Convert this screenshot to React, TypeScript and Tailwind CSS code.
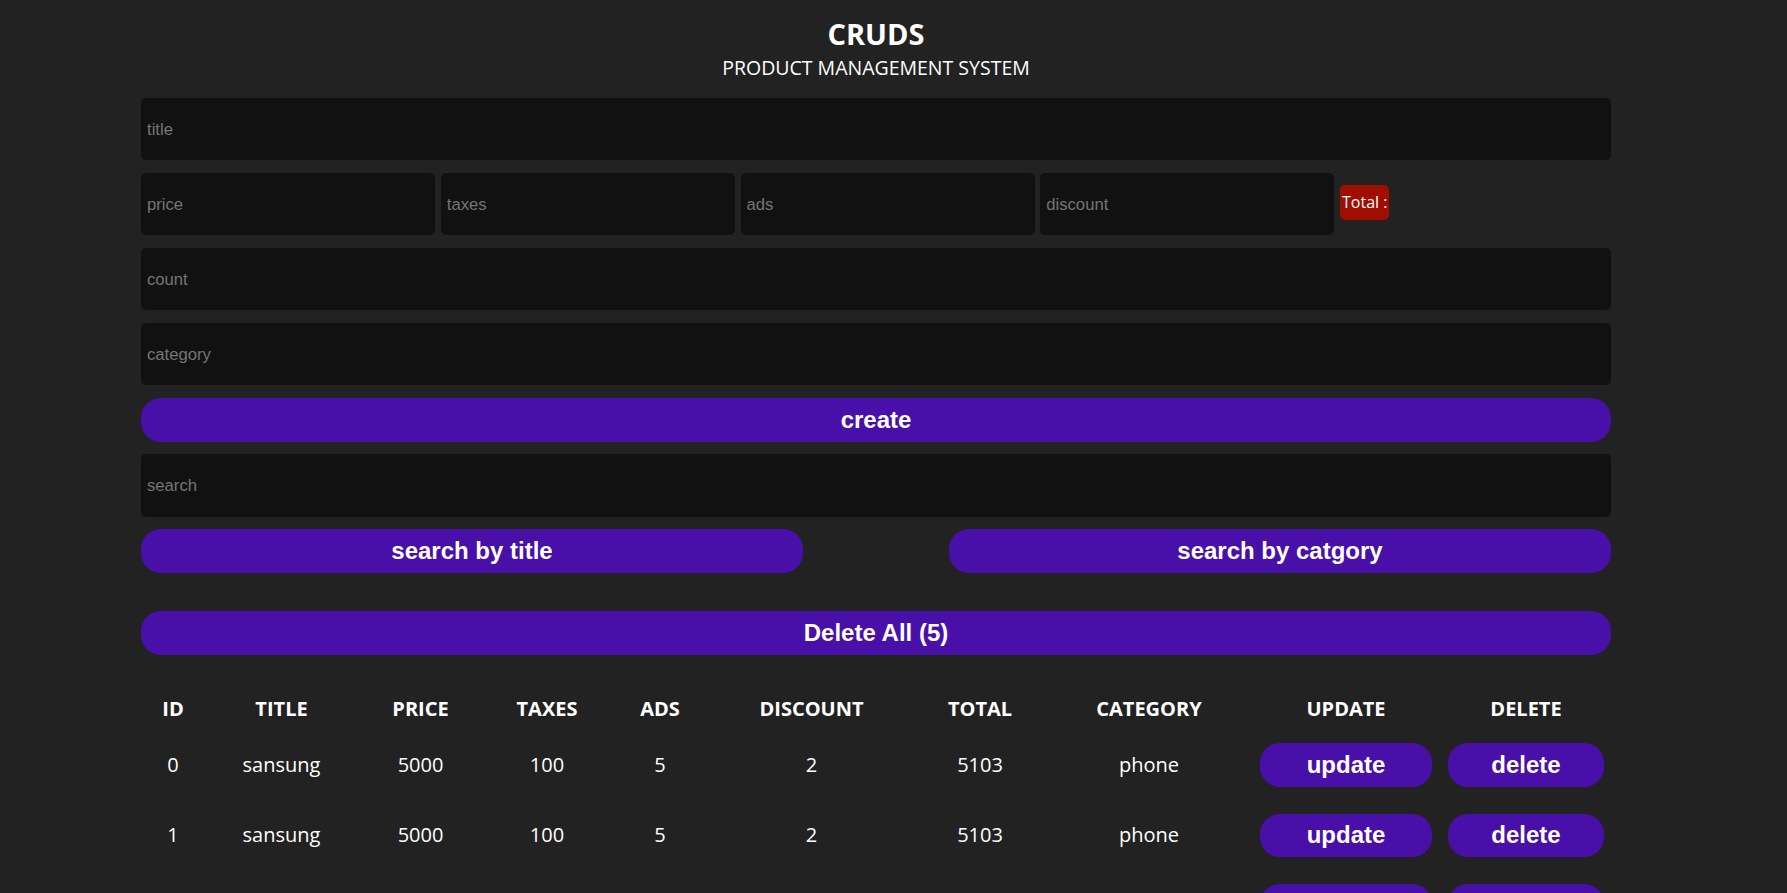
import React from "react";

const rows = [0, 1, 2, 3, 4].map((i) => ({
  id: i,
  title: "sansung",
  price: 5000,
  taxes: 100,
  ads: 5,
  discount: 2,
  total: 5103,
  category: "phone",
}));

const inputCls =
  "h-[62.5px] bg-[#111111] rounded-[5px] px-[6px] pt-[1px] text-white outline-none border-none font-['Liberation_Sans',Arial,sans-serif] text-[16.67px] placeholder:text-[#757575]";

const btnCls =
  "bg-[#480fa9] text-white rounded-[20px] font-bold font-['Liberation_Sans',Arial,sans-serif] text-[24px] h-[43.75px] flex items-center justify-center";

export default function App() {
  return (
    <div className="min-h-screen w-full bg-[#222222] text-white font-['Open_Sans','Noto_Sans',sans-serif] overflow-hidden">
      <div className="ml-[141px] w-[1470px] pb-10">
        <div className="flex flex-col items-center pt-[15.5px]">
          <h2 className="text-[29px] font-bold leading-[36px]">CRUDS</h2>
          <p className="mt-[4px] text-[19.5px] leading-[24px]">PRODUCT MANAGEMENT SYSTEM</p>
        </div>

        <div className="mt-[18.4px] flex flex-col gap-[12.5px]">
          <input className={inputCls + " w-full"} placeholder="title" />
          <div className="flex items-center gap-[5.75px]">
            <input className={inputCls + " w-[294px]"} placeholder="price" />
            <input className={inputCls + " w-[294px]"} placeholder="taxes" />
            <input className={inputCls + " w-[294px]"} placeholder="ads" />
            <input className={inputCls + " w-[294px]"} placeholder="discount" />
            <small className="bg-[#a00d02] rounded-[5px] h-[35px] mb-[4px] px-[2px] flex items-center text-[16px] leading-none text-white">
              Total :
            </small>
          </div>
          <input className={inputCls + " w-full"} placeholder="count" />
          <input className={inputCls + " w-full"} placeholder="category" />
          <button className={btnCls + " w-full"}>create</button>
          <input className={inputCls + " w-full"} placeholder="search" />
          <div className="flex justify-between">
            <button className={btnCls + " w-[662px]"}>search by title</button>
            <button className={btnCls + " w-[662px]"}>search by catgory</button>
          </div>
        </div>

        <button className={btnCls + " w-full mt-[38px]"}>Delete All (5)</button>

        <table className="mt-[33.5px] table-fixed w-[1471px] border-collapse text-center">
          <colgroup>
            <col className="w-[64px]" />
            <col className="w-[153px]" />
            <col className="w-[125px]" />
            <col className="w-[128px]" />
            <col className="w-[98px]" />
            <col className="w-[205px]" />
            <col className="w-[132px]" />
            <col className="w-[206px]" />
            <col className="w-[188px]" />
            <col className="w-[172px]" />
          </colgroup>
          <thead>
            <tr className="h-[41.5px] text-[20px] font-bold uppercase">
              <th className="p-0">id</th>
              <th className="p-0">title</th>
              <th className="p-0">price</th>
              <th className="p-0">taxes</th>
              <th className="p-0">ads</th>
              <th className="p-0">discount</th>
              <th className="p-0">total</th>
              <th className="p-0">category</th>
              <th className="p-0">update</th>
              <th className="p-0">delete</th>
            </tr>
          </thead>
          <tbody>
            {rows.map((r) => (
              <tr key={r.id} className="h-[70.5px] text-[20px]">
                <td className="p-0">{r.id}</td>
                <td className="p-0">{r.title}</td>
                <td className="p-0">{r.price}</td>
                <td className="p-0">{r.taxes}</td>
                <td className="p-0">{r.ads}</td>
                <td className="p-0">{r.discount}</td>
                <td className="p-0">{r.total}</td>
                <td className="p-0">{r.category}</td>
                <td className="p-0">
                  <div className="flex justify-center">
                    <button className={btnCls + " w-[172px]"}>update</button>
                  </div>
                </td>
                <td className="p-0">
                  <div className="flex justify-center">
                    <button className={btnCls + " w-[156px]"}>delete</button>
                  </div>
                </td>
              </tr>
            ))}
          </tbody>
        </table>
      </div>
    </div>
  );
}
